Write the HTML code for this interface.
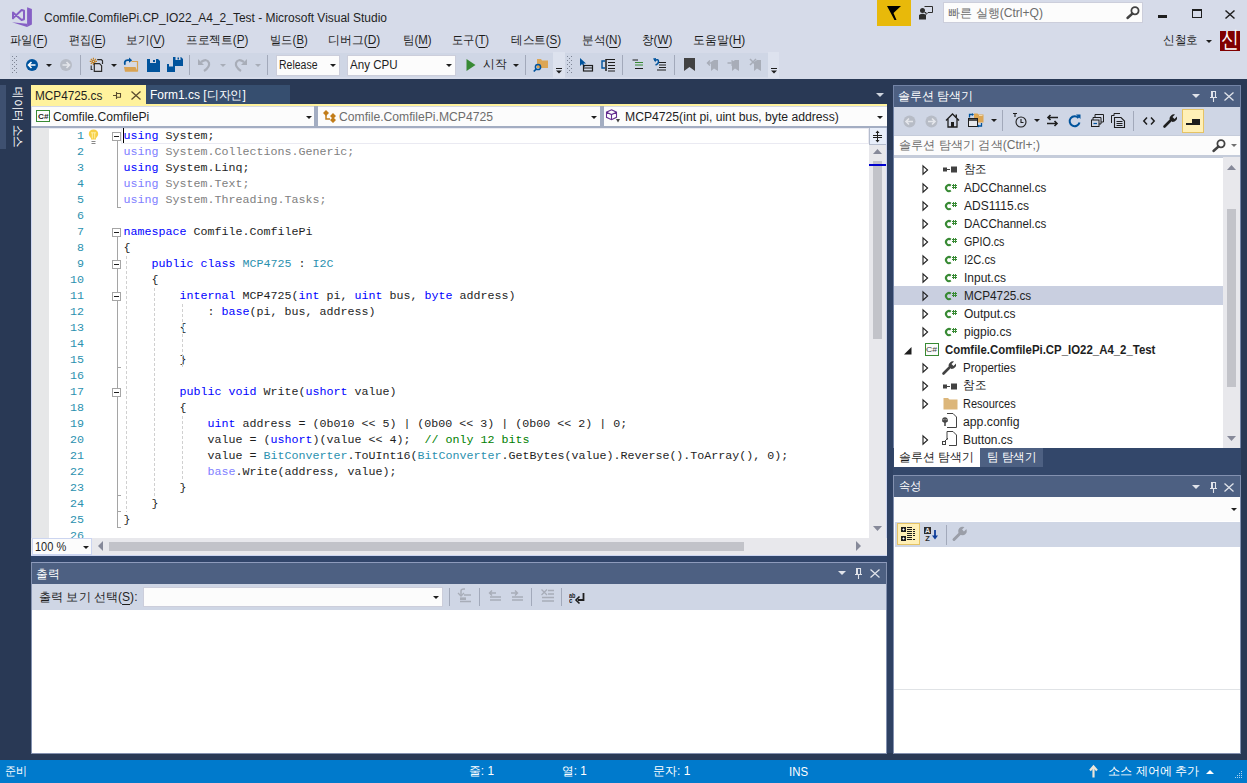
<!DOCTYPE html>
<html><head><meta charset="utf-8">
<style>
*{margin:0;padding:0;box-sizing:border-box}
html,body{width:1247px;height:783px;overflow:hidden}
body{position:relative;background:#D6DBE9;font-family:"Liberation Sans",sans-serif;font-size:12px;color:#1E1E1E}
.a{position:absolute}
.t{position:absolute;white-space:pre;line-height:1;display:inline-block;transform-origin:0 0}
svg{position:absolute;overflow:visible}
</style></head>
<body>
<div class="a" style="left:0px;top:0px;width:1247px;height:79px;background:#D6DBE9;"></div>
<svg style="left:8px;top:4px;" width="30" height="26" viewBox="0 0 30 26"><g fill="#865FC5"><path d="M19.1,3.2 L23.9,5 L23.9,20.6 L19.1,22.9 Z"/><path d="M4,18.3 L19.1,19.8 L19.1,22.9 Z"/></g><path d="M5,8.6 L13.6,16 L16,15.2 L16,6.8 L13.6,6 L5,14.4 Z" fill="none" stroke="#865FC5" stroke-width="2" stroke-linejoin="round"/></svg>
<span class="t" style="transform:scaleX(0.9973);left:44.00px;top:11.84px;font-size:12px;color:#1E1E1E;font-weight:normal;font-family:'Liberation Sans',sans-serif;">Comfile.ComfilePi.CP_IO22_A4_2_Test - Microsoft Visual Studio</span>
<div class="a" style="left:877px;top:0px;width:34px;height:26px;background:#E8B90A;"></div>
<svg style="left:877px;top:0px;" width="34" height="26" viewBox="0 0 34 26"><path d="M10,6 L24,6 L16.5,13 L19.5,20 L17.5,20 Z" fill="#000"/></svg>
<svg style="left:918px;top:5px;" width="16" height="16" viewBox="0 0 16 16"><circle cx="4.5" cy="5.5" r="2.5" fill="#2D2D2D"/><path d="M1,14.5 L1,10 Q4.5,7.5 8,10 L8,14.5 Z" fill="#2D2D2D"/><path d="M6.5,1.5 L14.5,1.5 L14.5,7.5 L10,7.5 L8,9.5 L8,7.5 L6.5,7.5" fill="none" stroke="#2D2D2D" stroke-width="1"/></svg>
<div class="a" style="left:943px;top:2px;width:200px;height:21px;background:#FCFCFC;border:1px solid #CCCEDB"></div>
<span class="t" style="transform:scaleX(1.0070);left:948.40px;top:6.84px;font-size:12px;color:#6D6D6D;font-weight:normal;font-family:'Liberation Sans',sans-serif;">빠른 실행(Ctrl+Q)</span>
<svg style="left:1126px;top:6px;" width="14" height="13" viewBox="0 0 14 13"><circle cx="9" cy="4.8" r="3.6" fill="none" stroke="#424242" stroke-width="1.8"/><path d="M6.5,7.5 L1.5,12" stroke="#424242" stroke-width="2.4" stroke-linecap="round"/></svg>
<div class="a" style="left:1158px;top:15px;width:9px;height:3px;background:#1E1E1E;"></div>
<div class="a" style="left:1192px;top:9px;width:10px;height:9px;background:transparent;border:1px solid #1E1E1E;border-top-width:2px"></div>
<svg style="left:1225px;top:10px;" width="10" height="9" viewBox="0 0 10 9"><path d="M0.5,0.5 L9.5,8.5 M9.5,0.5 L0.5,8.5" stroke="#1E1E1E" stroke-width="1.5"/></svg>
<span class="t" style="transform:scaleX(0.9531);left:10.00px;top:34.34px;font-size:12px;color:#1E1E1E;font-weight:normal;font-family:'Liberation Sans',sans-serif;">파일(<u style="text-underline-offset:2.5px">F</u>)</span>
<span class="t" style="transform:scaleX(0.9196);left:68.50px;top:34.34px;font-size:12px;color:#1E1E1E;font-weight:normal;font-family:'Liberation Sans',sans-serif;">편집(<u style="text-underline-offset:2.5px">E</u>)</span>
<span class="t" style="transform:scaleX(0.9746);left:126.00px;top:34.34px;font-size:12px;color:#1E1E1E;font-weight:normal;font-family:'Liberation Sans',sans-serif;">보기(<u style="text-underline-offset:2.5px">V</u>)</span>
<span class="t" style="transform:scaleX(0.9763);left:186.00px;top:34.34px;font-size:12px;color:#1E1E1E;font-weight:normal;font-family:'Liberation Sans',sans-serif;">프로젝트(<u style="text-underline-offset:2.5px">P</u>)</span>
<span class="t" style="transform:scaleX(0.9421);left:269.50px;top:34.34px;font-size:12px;color:#1E1E1E;font-weight:normal;font-family:'Liberation Sans',sans-serif;">빌드(<u style="text-underline-offset:2.5px">B</u>)</span>
<span class="t" style="transform:scaleX(0.9910);left:328.40px;top:34.34px;font-size:12px;color:#1E1E1E;font-weight:normal;font-family:'Liberation Sans',sans-serif;">디버그(<u style="text-underline-offset:2.5px">D</u>)</span>
<span class="t" style="transform:scaleX(0.9533);left:402.70px;top:34.34px;font-size:12px;color:#1E1E1E;font-weight:normal;font-family:'Liberation Sans',sans-serif;">팀(<u style="text-underline-offset:2.5px">M</u>)</span>
<span class="t" style="transform:scaleX(0.9430);left:452.20px;top:34.34px;font-size:12px;color:#1E1E1E;font-weight:normal;font-family:'Liberation Sans',sans-serif;">도구(<u style="text-underline-offset:2.5px">T</u>)</span>
<span class="t" style="transform:scaleX(0.9651);left:510.50px;top:34.34px;font-size:12px;color:#1E1E1E;font-weight:normal;font-family:'Liberation Sans',sans-serif;">테스트(<u style="text-underline-offset:2.5px">S</u>)</span>
<span class="t" style="transform:scaleX(0.9687);left:581.90px;top:34.34px;font-size:12px;color:#1E1E1E;font-weight:normal;font-family:'Liberation Sans',sans-serif;">분석(<u style="text-underline-offset:2.5px">N</u>)</span>
<span class="t" style="transform:scaleX(0.9672);left:641.80px;top:34.34px;font-size:12px;color:#1E1E1E;font-weight:normal;font-family:'Liberation Sans',sans-serif;">창(<u style="text-underline-offset:2.5px">W</u>)</span>
<span class="t" style="transform:scaleX(0.9910);left:693.00px;top:34.34px;font-size:12px;color:#1E1E1E;font-weight:normal;font-family:'Liberation Sans',sans-serif;">도움말(<u style="text-underline-offset:2.5px">H</u>)</span>
<span class="t" style="transform:scaleX(0.9722);left:1162.80px;top:33.84px;font-size:12px;color:#1E1E1E;font-weight:normal;font-family:'Liberation Sans',sans-serif;">신철호</span>
<svg style="left:1206px;top:39.5px;" width="6" height="4" viewBox="0 0 6 4"><path d="M0,0 L6,0 L3,3 Z" fill="#1E1E1E"/></svg>
<div class="a" style="left:1220px;top:31px;width:20px;height:20px;background:#800000;"></div>
<span class="t" style="transform:scaleX(0.7826);left:1221.00px;top:28.95px;font-size:22.5px;color:#FFFFFF;font-weight:normal;font-family:'Liberation Sans',sans-serif;">신</span>
<div class="a" style="left:10px;top:53px;width:543px;height:24px;background:#CFD6E5;"></div>
<div class="a" style="left:553px;top:52px;width:12px;height:26px;background:#DDE2EE;"></div>
<div class="a" style="left:565px;top:53px;width:203px;height:24px;background:#CFD6E5;"></div>
<div class="a" style="left:768px;top:52px;width:11px;height:26px;background:#DDE2EE;"></div>
<svg style="left:12px;top:56px;" width="5" height="18" viewBox="0 0 5 18"><rect x="0" y="0" width="1" height="1" fill="#7D8494"/><rect x="4" y="0" width="1" height="1" fill="#7D8494"/><rect x="2" y="2" width="1" height="1" fill="#7D8494"/><rect x="0" y="4" width="1" height="1" fill="#7D8494"/><rect x="4" y="4" width="1" height="1" fill="#7D8494"/><rect x="2" y="6" width="1" height="1" fill="#7D8494"/><rect x="0" y="8" width="1" height="1" fill="#7D8494"/><rect x="4" y="8" width="1" height="1" fill="#7D8494"/><rect x="2" y="10" width="1" height="1" fill="#7D8494"/><rect x="0" y="12" width="1" height="1" fill="#7D8494"/><rect x="4" y="12" width="1" height="1" fill="#7D8494"/><rect x="2" y="14" width="1" height="1" fill="#7D8494"/><rect x="0" y="16" width="1" height="1" fill="#7D8494"/><rect x="4" y="16" width="1" height="1" fill="#7D8494"/></svg>
<svg style="left:567px;top:56px;" width="5" height="18" viewBox="0 0 5 18"><rect x="0" y="0" width="1" height="1" fill="#7D8494"/><rect x="4" y="0" width="1" height="1" fill="#7D8494"/><rect x="2" y="2" width="1" height="1" fill="#7D8494"/><rect x="0" y="4" width="1" height="1" fill="#7D8494"/><rect x="4" y="4" width="1" height="1" fill="#7D8494"/><rect x="2" y="6" width="1" height="1" fill="#7D8494"/><rect x="0" y="8" width="1" height="1" fill="#7D8494"/><rect x="4" y="8" width="1" height="1" fill="#7D8494"/><rect x="2" y="10" width="1" height="1" fill="#7D8494"/><rect x="0" y="12" width="1" height="1" fill="#7D8494"/><rect x="4" y="12" width="1" height="1" fill="#7D8494"/><rect x="2" y="14" width="1" height="1" fill="#7D8494"/><rect x="0" y="16" width="1" height="1" fill="#7D8494"/><rect x="4" y="16" width="1" height="1" fill="#7D8494"/></svg>
<svg style="left:26px;top:59px;" width="13" height="13" viewBox="0 0 13 13"><circle cx="6" cy="6" r="6" fill="#00539C"/><path d="M2.5,6 L9.5,6 M5.5,3 L2.5,6 L5.5,9" stroke="#fff" stroke-width="1.6" fill="none"/></svg>
<svg style="left:46px;top:63.5px;" width="6" height="4" viewBox="0 0 6 4"><path d="M0,0 L6,0 L3,3 Z" fill="#1E1E1E"/></svg>
<svg style="left:60px;top:59px;" width="13" height="13" viewBox="0 0 13 13"><circle cx="6" cy="6" r="6" fill="#B7BCC6"/><path d="M2.5,6 L9.5,6 M6.5,3 L9.5,6 L6.5,9" stroke="#E4E6EB" stroke-width="1.6" fill="none"/></svg>
<div class="a" style="left:80px;top:55px;width:1px;height:20px;background:#A2A9BA;"></div>
<svg style="left:89px;top:57px;" width="16" height="16" viewBox="0 0 16 16"><circle cx="4.4" cy="4.4" r="1.2" fill="none" stroke="#C27D1A" stroke-width="1.1"/><path d="M6.30,4.40 L8.00,4.40 M5.74,5.74 L6.95,6.95 M4.40,6.30 L4.40,8.00 M3.06,5.74 L1.85,6.95 M2.50,4.40 L0.80,4.40 M3.06,3.06 L1.85,1.85 M4.40,2.50 L4.40,0.80 M5.74,3.06 L6.95,1.85 " stroke="#C27D1A" stroke-width="1.1"/><path d="M8.2,2.6 L12.3,2.6 L13.5,3.8 L13.5,7" fill="none" stroke="#2D2D2D" stroke-width="1.2"/><path d="M5.3,6.6 L10.5,6.6 L12.6,8.7 L12.6,14.4 L5.3,14.4 Z" fill="#D9DBE4" stroke="#2D2D2D" stroke-width="1.2"/><path d="M2.2,8.5 L2.2,12.5 L3.6,12.5" fill="none" stroke="#2D2D2D" stroke-width="1.1"/></svg>
<svg style="left:111px;top:63.5px;" width="6" height="4" viewBox="0 0 6 4"><path d="M0,0 L6,0 L3,3 Z" fill="#1E1E1E"/></svg>
<svg style="left:123px;top:57px;" width="16" height="16" viewBox="0 0 16 16"><rect x="3.5" y="4.5" width="11" height="10" fill="#D6D9E3"/><path d="M8.5,4.5 L14.5,4.5 L14.5,14.5" fill="none" stroke="#D9A352" stroke-width="1.2"/><path d="M1,10 L12.5,10 L14.6,14.8 L2,14.8 Z" fill="#D9A352"/><path d="M2,7.8 Q0.8,3.4 4.5,3.2 L6.5,3.2" stroke="#00539C" stroke-width="1.8" fill="none"/><path d="M6,0.6 L9.2,3.2 L6,5.8 Z" fill="#00539C"/></svg>
<svg style="left:147px;top:59px;" width="13" height="13" viewBox="0 0 13 13"><path d="M0,0 L11,0 L13,2 L13,13 L0,13 Z" fill="#00539C"/><rect x="3" y="0" width="6" height="4" fill="#CFD6E5"/><rect x="6" y="1" width="2" height="2" fill="#00539C"/></svg>
<svg style="left:167px;top:57px;" width="16" height="15" viewBox="0 0 16 15"><path d="M0,7 L7,7 L8,8 L8,15 L0,15 Z" fill="#00539C"/><rect x="2" y="7" width="4" height="2.5" fill="#CFD6E5"/><path d="M6,0 L14,0 L16,2 L16,9 L6,9 Z" fill="#00539C"/><rect x="8.5" y="0" width="5" height="3" fill="#CFD6E5"/><rect x="10.5" y="0.5" width="1.5" height="2" fill="#00539C"/></svg>
<div class="a" style="left:189px;top:55px;width:1px;height:20px;background:#A2A9BA;"></div>
<svg style="left:198px;top:58px;" width="14" height="14" viewBox="0 0 14 14"><path d="M3,4 Q9,0 11,5 Q12,9 6,13" fill="none" stroke="#A8ADB8" stroke-width="2.2"/><path d="M0,1 L0,7 L6,7 Z" fill="#A8ADB8"/></svg>
<svg style="left:220px;top:64px;" width="6" height="4" viewBox="0 0 6 4"><path d="M0,0 L6,0 L3,3 Z" fill="#A8ADB8"/></svg>
<svg style="left:233px;top:58px;" width="14" height="14" viewBox="0 0 14 14"><path d="M11,4 Q5,0 3,5 Q2,9 8,13" fill="none" stroke="#A8ADB8" stroke-width="2.2"/><path d="M14,1 L14,7 L8,7 Z" fill="#A8ADB8"/></svg>
<svg style="left:255px;top:64px;" width="6" height="4" viewBox="0 0 6 4"><path d="M0,0 L6,0 L3,3 Z" fill="#A8ADB8"/></svg>
<div class="a" style="left:267px;top:55px;width:1px;height:20px;background:#A2A9BA;"></div>
<div class="a" style="left:276px;top:55px;width:64px;height:21px;background:#FCFCFC;border:1px solid #CCCEDB"></div>
<span class="t" style="transform:scaleX(0.8744);left:279.30px;top:58.84px;font-size:12px;color:#1E1E1E;font-weight:normal;font-family:'Liberation Sans',sans-serif;">Release</span>
<svg style="left:330px;top:64px;" width="6" height="4" viewBox="0 0 6 4"><path d="M0,0 L6,0 L3,3 Z" fill="#1E1E1E"/></svg>
<div class="a" style="left:347px;top:55px;width:109px;height:21px;background:#FCFCFC;border:1px solid #CCCEDB"></div>
<span class="t" style="transform:scaleX(0.9644);left:350.20px;top:58.84px;font-size:12px;color:#1E1E1E;font-weight:normal;font-family:'Liberation Sans',sans-serif;">Any CPU</span>
<svg style="left:446px;top:64px;" width="6" height="4" viewBox="0 0 6 4"><path d="M0,0 L6,0 L3,3 Z" fill="#1E1E1E"/></svg>
<svg style="left:466px;top:59px;" width="10" height="12" viewBox="0 0 10 12"><path d="M0.5,0 L9.5,6 L0.5,12 Z" fill="#388A34"/></svg>
<span class="t" style="transform:scaleX(0.9792);left:483.40px;top:58.34px;font-size:12px;color:#1E1E1E;font-weight:normal;font-family:'Liberation Sans',sans-serif;">시작</span>
<svg style="left:513px;top:64px;" width="6" height="4" viewBox="0 0 6 4"><path d="M0,0 L6,0 L3,3 Z" fill="#1E1E1E"/></svg>
<div class="a" style="left:525px;top:55px;width:1px;height:20px;background:#A2A9BA;"></div>
<svg style="left:533px;top:57px;" width="16" height="15" viewBox="0 0 16 15"><path d="M4,2 L8,2 L9,3.5 L15,3.5 L15,11 L4,11 Z" fill="#DCA655"/><circle cx="5" cy="10" r="2.6" fill="none" stroke="#00539C" stroke-width="1.5"/><path d="M3.2,12 L0.8,14.5" stroke="#00539C" stroke-width="1.8"/></svg>
<svg style="left:556px;top:68px;" width="7" height="7" viewBox="0 0 7 7"><path d="M0,0.5 L6,0.5" stroke="#1E1E1E" stroke-width="1"/><path d="M0,2.5 L6,2.5 L3,5.5 Z" fill="#1E1E1E"/></svg>
<svg style="left:579px;top:58px;" width="15" height="14" viewBox="0 0 15 14"><path d="M1,0 L1,8 L3,6 L5,9 L6,8.5 L4.5,5.5 L7,5.5 Z" fill="#00539C"/><rect x="4.5" y="7.5" width="9" height="5.5" fill="none" stroke="#1E1E1E" stroke-width="1.2"/><path d="M4.5,10 L13.5,10" stroke="#1E1E1E" stroke-width="1"/></svg>
<svg style="left:601px;top:58px;" width="15" height="14" viewBox="0 0 15 14"><path d="M4,3 L1,3 L1,10 L4,10" fill="none" stroke="#00539C" stroke-width="1.4"/><path d="M5,1 L5,13" stroke="#1E1E1E" stroke-width="1.5"/><g stroke="#1E1E1E" stroke-width="1"><path d="M5,1.5 L14,1.5 M7,4.5 L14,4.5 M7,7.5 L14,7.5 M7,10.5 L14,10.5 M7,13 L14,13"/></g></svg>
<div class="a" style="left:622px;top:55px;width:1px;height:20px;background:#A2A9BA;"></div>
<svg style="left:632px;top:59px;" width="12" height="11" viewBox="0 0 12 11"><g stroke="#1E1E1E" stroke-width="1.1"><path d="M0.5,1 L6,1 M3,9.5 L11,9.5"/></g><g stroke="#388A34" stroke-width="1.1"><path d="M3,3.5 L11,3.5 M3,6 L11,6"/></g></svg>
<svg style="left:653px;top:58px;" width="14" height="13" viewBox="0 0 14 13"><path d="M1.5,2.5 Q5.5,0.5 5.5,3.5 Q5.5,6 2.5,7" fill="none" stroke="#00539C" stroke-width="1.5"/><path d="M0,0.5 L3,0 L2.5,4.5 Z" fill="#00539C"/><g stroke="#1E1E1E" stroke-width="1.1"><path d="M6,4.5 L13,4.5 M6,7 L13,7 M6,9.5 L13,9.5 M4,12 L13,12"/></g></svg>
<div class="a" style="left:674px;top:55px;width:1px;height:20px;background:#A2A9BA;"></div>
<svg style="left:684px;top:58px;" width="12" height="13" viewBox="0 0 12 13"><path d="M0,0 L11,0 L11,13 L5.5,9 L0,13 Z" fill="#424242"/></svg>
<svg style="left:706px;top:58px;" width="13" height="13" viewBox="0 0 13 13"><path d="M5,4 L5,13 L8,10.5 L12,13 L12,2 L8,2" fill="#A8ADB8"/><path d="M8,5 L1.5,5 M4,2.5 L1.5,5 L4,7.5" stroke="#A8ADB8" stroke-width="1.5" fill="none"/></svg>
<svg style="left:727px;top:58px;" width="13" height="13" viewBox="0 0 13 13"><path d="M5,4 L5,13 L8,10.5 L12,13 L12,2 L8,2" fill="#A8ADB8"/><path d="M0.5,5 L7,5 M4.5,2.5 L7,5 L4.5,7.5" stroke="#A8ADB8" stroke-width="1.5" fill="none"/></svg>
<svg style="left:749px;top:58px;" width="13" height="13" viewBox="0 0 13 13"><path d="M5,4 L5,13 L8,10.5 L12,13 L12,2 L8,2" fill="#A8ADB8"/><path d="M1,1 L7,7 M7,1 L1,7" stroke="#A8ADB8" stroke-width="1.5"/></svg>
<svg style="left:771px;top:68px;" width="7" height="7" viewBox="0 0 7 7"><path d="M0,0.5 L6,0.5" stroke="#1E1E1E" stroke-width="1"/><path d="M0,2.5 L6,2.5 L3,5.5 Z" fill="#1E1E1E"/></svg>
<div class="a" style="left:0px;top:79px;width:1247px;height:681px;background:#293955;"></div>
<div class="a" style="left:0px;top:85px;width:6px;height:64px;background:#3E5070;"></div>
<div class="a" style="left:887px;top:150px;width:6px;height:603px;background:#2F4264;"></div>
<div class="a" style="left:31px;top:556px;width:856px;height:6px;background:#31456A;"></div>
<span class="t" style="transform:rotate(90deg) scaleX(0.9651);left:22.50px;top:86.50px;font-size:11.5px;color:#FFFFFF;font-weight:normal;font-family:'Liberation Sans',sans-serif;">데이터 소스</span>
<div class="a" style="left:31px;top:85px;width:115px;height:19px;background:#FFF29D;"></div>
<div class="a" style="left:146px;top:85px;width:144px;height:19px;background:#364E6F;"></div>
<span class="t" style="transform:scaleX(0.9810);left:35.30px;top:89.84px;font-size:12px;color:#1E1E1E;font-weight:normal;font-family:'Liberation Sans',sans-serif;">MCP4725.cs</span>
<svg style="left:113px;top:92px;" width="9" height="8" viewBox="0 0 9 8"><path d="M0,3.5 L3,3.5 M3.5,0 L3.5,7 M3.5,1.5 L7.5,1.5 L7.5,5 M3.5,5.2 L8,5.2" stroke="#5A4C2E" stroke-width="1.1" fill="none"/></svg>
<svg style="left:131px;top:91px;" width="10" height="9" viewBox="0 0 10 9"><path d="M0.5,0.5 L9.5,8.5 M9.5,0.5 L0.5,8.5" stroke="#5A4C2E" stroke-width="1.3"/></svg>
<span class="t" style="transform:scaleX(0.9978);left:150.40px;top:88.64px;font-size:12px;color:#FFFFFF;font-weight:normal;font-family:'Liberation Sans',sans-serif;">Form1.cs [디자인]</span>
<svg style="left:876px;top:93px;" width="8" height="5" viewBox="0 0 8 5"><path d="M0,0 L8,0 L4,4 Z" fill="#CED4DD"/></svg>
<div class="a" style="left:31px;top:104px;width:856px;height:2px;background:#FFF29D;"></div>
<div class="a" style="left:31px;top:106px;width:856px;height:22px;background:#D5DAE8;"></div>
<div class="a" style="left:32px;top:107px;width:855px;height:19px;background:#FCFCFC;"></div>
<div class="a" style="left:31px;top:126px;width:856px;height:2px;background:#A3ADC2;"></div>
<div class="a" style="left:314px;top:106px;width:4px;height:22px;background:#A3ADC2;"></div>
<div class="a" style="left:600px;top:106px;width:4px;height:22px;background:#A3ADC2;"></div>
<div class="a" style="left:36px;top:110px;width:14px;height:12px;background:#FCFCFC;border:1px solid #388A34"></div>
<span class="t" style="transform:scaleX(1.0260);left:37.80px;top:112.73px;font-size:8px;color:#1E1E1E;font-weight:bold;font-family:'Liberation Sans',sans-serif;">C#</span>
<span class="t" style="transform:scaleX(1.0099);left:53.30px;top:110.84px;font-size:12px;color:#1E1E1E;font-weight:normal;font-family:'Liberation Sans',sans-serif;">Comfile.ComfilePi</span>
<svg style="left:306px;top:116px;" width="6" height="4" viewBox="0 0 6 4"><path d="M0,0 L6,0 L3,3 Z" fill="#1E1E1E"/></svg>
<svg style="left:322px;top:109px;" width="15" height="14" viewBox="0 0 15 14"><path d="M1,4 L4,1 L7,4 L4,7 Z" fill="#C27D1A"/><path d="M4,6 L4,10 L8,10" stroke="#C27D1A" stroke-width="1.5" fill="none"/><path d="M8,7 L11,4 L14,7 L11,10 Z M8,11 L11,8 L14,11 L11,14 Z" fill="#C27D1A"/></svg>
<span class="t" style="transform:scaleX(1.0127);left:339.00px;top:110.84px;font-size:12px;color:#6D6D6D;font-weight:normal;font-family:'Liberation Sans',sans-serif;">Comfile.ComfilePi.MCP4725</span>
<svg style="left:591px;top:116px;" width="6" height="4" viewBox="0 0 6 4"><path d="M0,0 L6,0 L3,3 Z" fill="#1E1E1E"/></svg>
<svg style="left:606px;top:109px;" width="15" height="14" viewBox="0 0 15 14"><path d="M5.5,0.8 L10.5,3.2 L10.5,8.3 L5.5,10.7 L0.5,8.3 L0.5,3.2 Z M0.5,3.2 L5.5,5.6 L10.5,3.2 M5.5,5.6 L5.5,10.7" fill="none" stroke="#652D90" stroke-width="1.1"/><path d="M10,10 L14,10 L12,13.5 Z" fill="#424242"/></svg>
<span class="t" style="transform:scaleX(1.0143);left:624.50px;top:110.84px;font-size:12px;color:#1E1E1E;font-weight:normal;font-family:'Liberation Sans',sans-serif;">MCP4725(int pi, uint bus, byte address)</span>
<svg style="left:877px;top:116px;" width="6" height="4" viewBox="0 0 6 4"><path d="M0,0 L6,0 L3,3 Z" fill="#1E1E1E"/></svg>
<div class="a" style="left:31px;top:128px;width:856px;height:428px;background:#FFFFFF;"></div>
<div class="a" style="left:31px;top:128px;width:1px;height:428px;background:#CCD5F0;"></div>
<div class="a" style="left:886px;top:128px;width:1px;height:428px;background:#CCD5F0;"></div>
<div class="a" style="left:32px;top:128px;width:837px;height:1px;background:#E8EAF3;"></div>
<div class="a" style="left:32px;top:128px;width:17px;height:410px;background:#E6E7E8;"></div>
<div class="a" style="left:121px;top:128px;width:748px;height:16px;background:transparent;border:1px solid #EAEAF2"></div>
<div class="a" style="left:123px;top:128px;width:1px;height:15px;background:#000000;"></div>
<span class="t" style="left:77.00px;top:131.05px;font-size:11.67px;color:#2B91AF;font-weight:normal;font-family:'Liberation Mono',monospace;">1</span>
<span class="t" style="left:77.00px;top:147.05px;font-size:11.67px;color:#2B91AF;font-weight:normal;font-family:'Liberation Mono',monospace;">2</span>
<span class="t" style="left:77.00px;top:163.05px;font-size:11.67px;color:#2B91AF;font-weight:normal;font-family:'Liberation Mono',monospace;">3</span>
<span class="t" style="left:77.00px;top:179.05px;font-size:11.67px;color:#2B91AF;font-weight:normal;font-family:'Liberation Mono',monospace;">4</span>
<span class="t" style="left:77.00px;top:195.05px;font-size:11.67px;color:#2B91AF;font-weight:normal;font-family:'Liberation Mono',monospace;">5</span>
<span class="t" style="left:77.00px;top:211.05px;font-size:11.67px;color:#2B91AF;font-weight:normal;font-family:'Liberation Mono',monospace;">6</span>
<span class="t" style="left:77.00px;top:227.05px;font-size:11.67px;color:#2B91AF;font-weight:normal;font-family:'Liberation Mono',monospace;">7</span>
<span class="t" style="left:77.00px;top:243.05px;font-size:11.67px;color:#2B91AF;font-weight:normal;font-family:'Liberation Mono',monospace;">8</span>
<span class="t" style="left:77.00px;top:259.05px;font-size:11.67px;color:#2B91AF;font-weight:normal;font-family:'Liberation Mono',monospace;">9</span>
<span class="t" style="left:70.00px;top:275.05px;font-size:11.67px;color:#2B91AF;font-weight:normal;font-family:'Liberation Mono',monospace;">10</span>
<span class="t" style="left:70.00px;top:291.05px;font-size:11.67px;color:#2B91AF;font-weight:normal;font-family:'Liberation Mono',monospace;">11</span>
<span class="t" style="left:70.00px;top:307.05px;font-size:11.67px;color:#2B91AF;font-weight:normal;font-family:'Liberation Mono',monospace;">12</span>
<span class="t" style="left:70.00px;top:323.05px;font-size:11.67px;color:#2B91AF;font-weight:normal;font-family:'Liberation Mono',monospace;">13</span>
<span class="t" style="left:70.00px;top:339.05px;font-size:11.67px;color:#2B91AF;font-weight:normal;font-family:'Liberation Mono',monospace;">14</span>
<span class="t" style="left:70.00px;top:355.05px;font-size:11.67px;color:#2B91AF;font-weight:normal;font-family:'Liberation Mono',monospace;">15</span>
<span class="t" style="left:70.00px;top:371.05px;font-size:11.67px;color:#2B91AF;font-weight:normal;font-family:'Liberation Mono',monospace;">16</span>
<span class="t" style="left:70.00px;top:387.05px;font-size:11.67px;color:#2B91AF;font-weight:normal;font-family:'Liberation Mono',monospace;">17</span>
<span class="t" style="left:70.00px;top:403.05px;font-size:11.67px;color:#2B91AF;font-weight:normal;font-family:'Liberation Mono',monospace;">18</span>
<span class="t" style="left:70.00px;top:419.05px;font-size:11.67px;color:#2B91AF;font-weight:normal;font-family:'Liberation Mono',monospace;">19</span>
<span class="t" style="left:70.00px;top:435.05px;font-size:11.67px;color:#2B91AF;font-weight:normal;font-family:'Liberation Mono',monospace;">20</span>
<span class="t" style="left:70.00px;top:451.05px;font-size:11.67px;color:#2B91AF;font-weight:normal;font-family:'Liberation Mono',monospace;">21</span>
<span class="t" style="left:70.00px;top:467.05px;font-size:11.67px;color:#2B91AF;font-weight:normal;font-family:'Liberation Mono',monospace;">22</span>
<span class="t" style="left:70.00px;top:483.05px;font-size:11.67px;color:#2B91AF;font-weight:normal;font-family:'Liberation Mono',monospace;">23</span>
<span class="t" style="left:70.00px;top:499.05px;font-size:11.67px;color:#2B91AF;font-weight:normal;font-family:'Liberation Mono',monospace;">24</span>
<span class="t" style="left:70.00px;top:515.05px;font-size:11.67px;color:#2B91AF;font-weight:normal;font-family:'Liberation Mono',monospace;">25</span>
<span class="t" style="left:70.00px;top:531.05px;font-size:11.67px;color:#2B91AF;font-weight:normal;font-family:'Liberation Mono',monospace;">26</span>
<svg style="left:88px;top:129px;" width="11" height="16" viewBox="0 0 11 16"><path d="M5.5,0.6 C8.3,0.6 10.2,2.4 10.2,5 C10.2,6.8 9,7.8 8,9.2 L8,10.5 L3,10.5 L3,9.2 C2,7.8 0.8,6.8 0.8,5 C0.8,2.4 2.7,0.6 5.5,0.6 Z" fill="#F7D046"/><path d="M3,3.8 L8,3.8 M4.3,3.8 L4.3,9.5 M6.7,3.8 L6.7,9.5" stroke="#FFF3B0" stroke-width="0.9"/><path d="M3.5,12.5 L7.5,12.5 M3.5,14.5 L7.5,14.5" stroke="#888" stroke-width="1"/></svg>
<span class="t" style="left:123.50px;top:131.05px;font-size:11.67px;color:#0000FF;font-weight:normal;font-family:'Liberation Mono',monospace;">using</span>
<span class="t" style="left:165.50px;top:131.05px;font-size:11.67px;color:#1E1E1E;font-weight:normal;font-family:'Liberation Mono',monospace;">System;</span>
<span class="t" style="left:123.50px;top:147.05px;font-size:11.67px;color:#8080FF;font-weight:normal;font-family:'Liberation Mono',monospace;">using</span>
<span class="t" style="left:165.50px;top:147.05px;font-size:11.67px;color:#808080;font-weight:normal;font-family:'Liberation Mono',monospace;">System.Collections.Generic;</span>
<span class="t" style="left:123.50px;top:163.05px;font-size:11.67px;color:#0000FF;font-weight:normal;font-family:'Liberation Mono',monospace;">using</span>
<span class="t" style="left:165.50px;top:163.05px;font-size:11.67px;color:#1E1E1E;font-weight:normal;font-family:'Liberation Mono',monospace;">System.Linq;</span>
<span class="t" style="left:123.50px;top:179.05px;font-size:11.67px;color:#8080FF;font-weight:normal;font-family:'Liberation Mono',monospace;">using</span>
<span class="t" style="left:165.50px;top:179.05px;font-size:11.67px;color:#808080;font-weight:normal;font-family:'Liberation Mono',monospace;">System.Text;</span>
<span class="t" style="left:123.50px;top:195.05px;font-size:11.67px;color:#8080FF;font-weight:normal;font-family:'Liberation Mono',monospace;">using</span>
<span class="t" style="left:165.50px;top:195.05px;font-size:11.67px;color:#808080;font-weight:normal;font-family:'Liberation Mono',monospace;">System.Threading.Tasks;</span>
<span class="t" style="left:123.50px;top:227.05px;font-size:11.67px;color:#0000FF;font-weight:normal;font-family:'Liberation Mono',monospace;">namespace</span>
<span class="t" style="left:193.50px;top:227.05px;font-size:11.67px;color:#1E1E1E;font-weight:normal;font-family:'Liberation Mono',monospace;">Comfile.ComfilePi</span>
<span class="t" style="left:123.50px;top:243.05px;font-size:11.67px;color:#1E1E1E;font-weight:normal;font-family:'Liberation Mono',monospace;">{</span>
<span class="t" style="left:151.50px;top:259.05px;font-size:11.67px;color:#0000FF;font-weight:normal;font-family:'Liberation Mono',monospace;">public</span>
<span class="t" style="left:200.50px;top:259.05px;font-size:11.67px;color:#0000FF;font-weight:normal;font-family:'Liberation Mono',monospace;">class</span>
<span class="t" style="left:242.50px;top:259.05px;font-size:11.67px;color:#2B91AF;font-weight:normal;font-family:'Liberation Mono',monospace;">MCP4725</span>
<span class="t" style="left:298.50px;top:259.05px;font-size:11.67px;color:#1E1E1E;font-weight:normal;font-family:'Liberation Mono',monospace;">: </span>
<span class="t" style="left:312.50px;top:259.05px;font-size:11.67px;color:#2B91AF;font-weight:normal;font-family:'Liberation Mono',monospace;">I2C</span>
<span class="t" style="left:151.50px;top:275.05px;font-size:11.67px;color:#1E1E1E;font-weight:normal;font-family:'Liberation Mono',monospace;">{</span>
<span class="t" style="left:179.50px;top:291.05px;font-size:11.67px;color:#0000FF;font-weight:normal;font-family:'Liberation Mono',monospace;">internal</span>
<span class="t" style="left:242.50px;top:291.05px;font-size:11.67px;color:#1E1E1E;font-weight:normal;font-family:'Liberation Mono',monospace;">MCP4725(</span>
<span class="t" style="left:298.50px;top:291.05px;font-size:11.67px;color:#0000FF;font-weight:normal;font-family:'Liberation Mono',monospace;">int</span>
<span class="t" style="left:326.50px;top:291.05px;font-size:11.67px;color:#1E1E1E;font-weight:normal;font-family:'Liberation Mono',monospace;">pi, </span>
<span class="t" style="left:354.50px;top:291.05px;font-size:11.67px;color:#0000FF;font-weight:normal;font-family:'Liberation Mono',monospace;">uint</span>
<span class="t" style="left:389.50px;top:291.05px;font-size:11.67px;color:#1E1E1E;font-weight:normal;font-family:'Liberation Mono',monospace;">bus, </span>
<span class="t" style="left:424.50px;top:291.05px;font-size:11.67px;color:#0000FF;font-weight:normal;font-family:'Liberation Mono',monospace;">byte</span>
<span class="t" style="left:459.50px;top:291.05px;font-size:11.67px;color:#1E1E1E;font-weight:normal;font-family:'Liberation Mono',monospace;">address)</span>
<span class="t" style="left:207.50px;top:307.05px;font-size:11.67px;color:#1E1E1E;font-weight:normal;font-family:'Liberation Mono',monospace;">: </span>
<span class="t" style="left:221.50px;top:307.05px;font-size:11.67px;color:#0000FF;font-weight:normal;font-family:'Liberation Mono',monospace;">base</span>
<span class="t" style="left:249.50px;top:307.05px;font-size:11.67px;color:#1E1E1E;font-weight:normal;font-family:'Liberation Mono',monospace;">(pi, bus, address)</span>
<span class="t" style="left:179.50px;top:323.05px;font-size:11.67px;color:#1E1E1E;font-weight:normal;font-family:'Liberation Mono',monospace;">{</span>
<span class="t" style="left:179.50px;top:355.05px;font-size:11.67px;color:#1E1E1E;font-weight:normal;font-family:'Liberation Mono',monospace;">}</span>
<span class="t" style="left:179.50px;top:387.05px;font-size:11.67px;color:#0000FF;font-weight:normal;font-family:'Liberation Mono',monospace;">public</span>
<span class="t" style="left:228.50px;top:387.05px;font-size:11.67px;color:#0000FF;font-weight:normal;font-family:'Liberation Mono',monospace;">void</span>
<span class="t" style="left:263.50px;top:387.05px;font-size:11.67px;color:#1E1E1E;font-weight:normal;font-family:'Liberation Mono',monospace;">Write(</span>
<span class="t" style="left:305.50px;top:387.05px;font-size:11.67px;color:#0000FF;font-weight:normal;font-family:'Liberation Mono',monospace;">ushort</span>
<span class="t" style="left:354.50px;top:387.05px;font-size:11.67px;color:#1E1E1E;font-weight:normal;font-family:'Liberation Mono',monospace;">value)</span>
<span class="t" style="left:179.50px;top:403.05px;font-size:11.67px;color:#1E1E1E;font-weight:normal;font-family:'Liberation Mono',monospace;">{</span>
<span class="t" style="left:207.50px;top:419.05px;font-size:11.67px;color:#0000FF;font-weight:normal;font-family:'Liberation Mono',monospace;">uint</span>
<span class="t" style="left:242.50px;top:419.05px;font-size:11.67px;color:#1E1E1E;font-weight:normal;font-family:'Liberation Mono',monospace;">address = (0b010 &lt;&lt; 5) | (0b00 &lt;&lt; 3) | (0b00 &lt;&lt; 2) | 0;</span>
<span class="t" style="left:207.50px;top:435.05px;font-size:11.67px;color:#1E1E1E;font-weight:normal;font-family:'Liberation Mono',monospace;">value = (</span>
<span class="t" style="left:270.50px;top:435.05px;font-size:11.67px;color:#0000FF;font-weight:normal;font-family:'Liberation Mono',monospace;">ushort</span>
<span class="t" style="left:312.50px;top:435.05px;font-size:11.67px;color:#1E1E1E;font-weight:normal;font-family:'Liberation Mono',monospace;">)(value &lt;&lt; 4);  </span>
<span class="t" style="left:424.50px;top:435.05px;font-size:11.67px;color:#008000;font-weight:normal;font-family:'Liberation Mono',monospace;">// only 12 bits</span>
<span class="t" style="left:207.50px;top:451.05px;font-size:11.67px;color:#1E1E1E;font-weight:normal;font-family:'Liberation Mono',monospace;">value = </span>
<span class="t" style="left:263.50px;top:451.05px;font-size:11.67px;color:#2B91AF;font-weight:normal;font-family:'Liberation Mono',monospace;">BitConverter</span>
<span class="t" style="left:347.50px;top:451.05px;font-size:11.67px;color:#1E1E1E;font-weight:normal;font-family:'Liberation Mono',monospace;">.ToUInt16(</span>
<span class="t" style="left:417.50px;top:451.05px;font-size:11.67px;color:#2B91AF;font-weight:normal;font-family:'Liberation Mono',monospace;">BitConverter</span>
<span class="t" style="left:501.50px;top:451.05px;font-size:11.67px;color:#1E1E1E;font-weight:normal;font-family:'Liberation Mono',monospace;">.GetBytes(value).Reverse().ToArray(), 0);</span>
<span class="t" style="left:207.50px;top:467.05px;font-size:11.67px;color:#8080FF;font-weight:normal;font-family:'Liberation Mono',monospace;">base</span>
<span class="t" style="left:235.50px;top:467.05px;font-size:11.67px;color:#1E1E1E;font-weight:normal;font-family:'Liberation Mono',monospace;">.Write(address, value);</span>
<span class="t" style="left:179.50px;top:483.05px;font-size:11.67px;color:#1E1E1E;font-weight:normal;font-family:'Liberation Mono',monospace;">}</span>
<span class="t" style="left:151.50px;top:499.05px;font-size:11.67px;color:#1E1E1E;font-weight:normal;font-family:'Liberation Mono',monospace;">}</span>
<span class="t" style="left:123.50px;top:515.05px;font-size:11.67px;color:#1E1E1E;font-weight:normal;font-family:'Liberation Mono',monospace;">}</span>
<div class="a" style="left:117px;top:141px;width:1px;height:66px;background:#A5A5A5;"></div>
<div class="a" style="left:117px;top:207px;width:4px;height:1px;background:#A5A5A5;"></div>
<div class="a" style="left:117px;top:237px;width:1px;height:290px;background:#A5A5A5;"></div>
<div class="a" style="left:117px;top:527px;width:4px;height:1px;background:#A5A5A5;"></div>
<div class="a" style="left:117px;top:269px;width:1px;height:242px;background:#A5A5A5;"></div>
<div class="a" style="left:117px;top:511px;width:4px;height:1px;background:#A5A5A5;"></div>
<div class="a" style="left:117px;top:301px;width:1px;height:66px;background:#A5A5A5;"></div>
<div class="a" style="left:117px;top:367px;width:4px;height:1px;background:#A5A5A5;"></div>
<div class="a" style="left:117px;top:397px;width:1px;height:98px;background:#A5A5A5;"></div>
<div class="a" style="left:117px;top:495px;width:4px;height:1px;background:#A5A5A5;"></div>
<svg style="left:112px;top:132px;" width="9" height="9" viewBox="0 0 9 9"><rect x="0.5" y="0.5" width="8" height="8" fill="#fff" stroke="#A5A5A5"/><path d="M2,4.5 L7,4.5" stroke="#1E1E1E"/></svg>
<svg style="left:112px;top:228px;" width="9" height="9" viewBox="0 0 9 9"><rect x="0.5" y="0.5" width="8" height="8" fill="#fff" stroke="#A5A5A5"/><path d="M2,4.5 L7,4.5" stroke="#1E1E1E"/></svg>
<svg style="left:112px;top:260px;" width="9" height="9" viewBox="0 0 9 9"><rect x="0.5" y="0.5" width="8" height="8" fill="#fff" stroke="#A5A5A5"/><path d="M2,4.5 L7,4.5" stroke="#1E1E1E"/></svg>
<svg style="left:112px;top:292px;" width="9" height="9" viewBox="0 0 9 9"><rect x="0.5" y="0.5" width="8" height="8" fill="#fff" stroke="#A5A5A5"/><path d="M2,4.5 L7,4.5" stroke="#1E1E1E"/></svg>
<svg style="left:112px;top:388px;" width="9" height="9" viewBox="0 0 9 9"><rect x="0.5" y="0.5" width="8" height="8" fill="#fff" stroke="#A5A5A5"/><path d="M2,4.5 L7,4.5" stroke="#1E1E1E"/></svg>
<div class="a" style="left:126px;top:256px;width:1px;height:256px;background:transparent;background-image:linear-gradient(#D0D0D0 60%,transparent 60%);background-size:1px 5px"></div>
<div class="a" style="left:154px;top:288px;width:1px;height:208px;background:transparent;background-image:linear-gradient(#D0D0D0 60%,transparent 60%);background-size:1px 5px"></div>
<div class="a" style="left:182px;top:304px;width:1px;height:64px;background:transparent;background-image:linear-gradient(#D0D0D0 60%,transparent 60%);background-size:1px 5px"></div>
<div class="a" style="left:182px;top:416px;width:1px;height:64px;background:transparent;background-image:linear-gradient(#D0D0D0 60%,transparent 60%);background-size:1px 5px"></div>
<div class="a" style="left:869px;top:128px;width:17px;height:410px;background:#E8E8EC;"></div>
<div class="a" style="left:869px;top:128px;width:17px;height:17px;background:#E8EEFA;border-left:1px solid #B4BCCD;border-bottom:1px solid #B4BCCD"></div>
<svg style="left:872px;top:130px;" width="11" height="13" viewBox="0 0 11 13"><path d="M1,5.5 L10,5.5 M1,7.5 L10,7.5" stroke="#1E1E1E" stroke-width="1"/><path d="M5.5,1 L5.5,12" stroke="#1E1E1E" stroke-width="1"/><path d="M3.5,3 L5.5,0.5 L7.5,3 Z M3.5,10 L5.5,12.5 L7.5,10 Z" fill="#1E1E1E"/></svg>
<svg style="left:873px;top:149px;" width="9" height="5" viewBox="0 0 9 5"><path d="M0,5 L4.5,0 L9,5 Z" fill="#868999"/></svg>
<div class="a" style="left:869px;top:164px;width:17px;height:2px;background:#0000CD;"></div>
<div class="a" style="left:873px;top:161px;width:9px;height:178px;background:#C2C3C9;"></div>
<div class="a" style="left:869px;top:164px;width:17px;height:2px;background:#0000CD;"></div>
<svg style="left:873px;top:526px;" width="9" height="5" viewBox="0 0 9 5"><path d="M0,0 L4.5,5 L9,0 Z" fill="#868999"/></svg>
<div class="a" style="left:31px;top:538px;width:856px;height:18px;background:#E8E8EC;"></div>
<div class="a" style="left:32px;top:538px;width:60px;height:17px;background:#FCFCFC;border:1px solid #CCD5F0"></div>
<span class="t" style="transform:scaleX(0.9168);left:34.60px;top:540.84px;font-size:12px;color:#1E1E1E;font-weight:normal;font-family:'Liberation Sans',sans-serif;">100 %</span>
<svg style="left:83px;top:546px;" width="6" height="4" viewBox="0 0 6 4"><path d="M0,0 L6,0 L3,3 Z" fill="#1E1E1E"/></svg>
<svg style="left:98px;top:541px;" width="6" height="10" viewBox="0 0 6 10"><path d="M5,0 L0,5 L5,10 Z" fill="#868999"/></svg>
<div class="a" style="left:109px;top:542px;width:635px;height:9px;background:#C2C3C9;"></div>
<svg style="left:856px;top:541px;" width="6" height="10" viewBox="0 0 6 10"><path d="M0,0 L5,5 L0,10 Z" fill="#868999"/></svg>
<div class="a" style="left:31px;top:555px;width:856px;height:1px;background:#CCD5F0;"></div>
<div class="a" style="left:31px;top:562px;width:856px;height:192px;background:#FFFFFF;border:1px solid #8391B0;border-top-color:#8E9BBC"></div>
<div class="a" style="left:32px;top:563px;width:854px;height:21px;background:#4D6082;"></div>
<div class="a" style="left:32px;top:584px;width:854px;height:26px;background:#CFD6E5;"></div>
<span class="t" style="transform:scaleX(0.9792);left:36.00px;top:567.84px;font-size:12px;color:#FFFFFF;font-weight:normal;font-family:'Liberation Sans',sans-serif;">출력</span>
<svg style="left:838px;top:571px;" width="8" height="4" viewBox="0 0 8 4"><path d="M0,0 L8,0 L4,4 Z" fill="#E0E3EA"/></svg>
<svg style="left:855px;top:568px;" width="8" height="11" viewBox="0 0 8 11"><path d="M2,0.5 L5.5,0.5 L5.5,6.5 M0,6.5 L7,6.5 M3.5,6.5 L3.5,11" fill="none" stroke="#E0E3EA" stroke-width="1.1"/><rect x="1" y="0" width="2" height="6.5" fill="#E0E3EA"/></svg>
<svg style="left:870px;top:568.5px;" width="10" height="9" viewBox="0 0 10 9"><path d="M0.5,0.5 L9.5,8.5 M9.5,0.5 L0.5,8.5" stroke="#E0E3EA" stroke-width="1.3"/></svg>
<span class="t" style="transform:scaleX(1.0048);left:38.60px;top:591.34px;font-size:12px;color:#1E1E1E;font-weight:normal;font-family:'Liberation Sans',sans-serif;">출력 보기 선택(<u style="text-underline-offset:2.5px">S</u>):</span>
<div class="a" style="left:143px;top:587px;width:300px;height:20px;background:#FCFCFC;border:1px solid #CCCEDB"></div>
<svg style="left:433px;top:596px;" width="6" height="4" viewBox="0 0 6 4"><path d="M0,0 L6,0 L3,3 Z" fill="#1E1E1E"/></svg>
<div class="a" style="left:449px;top:588px;width:1px;height:18px;background:#A2A9BA;"></div>
<svg style="left:458px;top:588px;" width="14" height="16" viewBox="0 0 14 16"><path d="M3,7 L3,3 Q3,1 6,1 L7,1" stroke="#A8ADB8" stroke-width="1.5" fill="none"/><path d="M0,5 L3,8 L6,5" stroke="#A8ADB8" stroke-width="1.3" fill="none"/><g stroke="#A8ADB8" stroke-width="1.3"><path d="M6,7 L13,7 M2,10.5 L8,10.5 M2,13.5 L13,13.5"/></g><rect x="2" y="9.5" width="6" height="2.5" fill="#A8ADB8"/></svg>
<div class="a" style="left:479px;top:588px;width:1px;height:18px;background:#A2A9BA;"></div>
<svg style="left:488px;top:589px;" width="14" height="14" viewBox="0 0 14 14"><path d="M8,4 L2,4 M4,1.5 L1.5,4 L4,6.5" stroke="#A8ADB8" stroke-width="1.4" fill="none"/><g stroke="#A8ADB8" stroke-width="1.4"><path d="M2,8 L13,8 M2,11 L13,11"/></g></svg>
<svg style="left:510px;top:589px;" width="14" height="14" viewBox="0 0 14 14"><path d="M1,4 L7,4 M5,1.5 L7.5,4 L5,6.5" stroke="#A8ADB8" stroke-width="1.4" fill="none"/><g stroke="#A8ADB8" stroke-width="1.4"><path d="M2,8 L13,8 M2,11 L13,11"/></g></svg>
<div class="a" style="left:531px;top:588px;width:1px;height:18px;background:#A2A9BA;"></div>
<svg style="left:541px;top:589px;" width="14" height="14" viewBox="0 0 14 14"><path d="M0.5,0.5 L6,6 M6,0.5 L0.5,6" stroke="#A8ADB8" stroke-width="1.3"/><g stroke="#A8ADB8" stroke-width="1.4"><path d="M7,1.5 L13,1.5 M7,5 L13,5 M1,8.5 L13,8.5 M1,12 L13,12"/></g></svg>
<div class="a" style="left:561px;top:588px;width:1px;height:18px;background:#A2A9BA;"></div>
<span class="t" style="transform:scaleX(0.7954);left:569.30px;top:591.57px;font-size:7px;color:#1E1E1E;font-weight:bold;font-family:'Liberation Sans',sans-serif;">ab</span>
<span class="t" style="transform:scaleX(0.8960);left:569.30px;top:596.57px;font-size:7px;color:#1E1E1E;font-weight:bold;font-family:'Liberation Sans',sans-serif;">c</span>
<svg style="left:575px;top:593px;" width="11" height="11" viewBox="0 0 11 11"><path d="M8.5,0 L8.5,7 L3,7" stroke="#1E1E1E" stroke-width="1.8" fill="none"/><path d="M4.5,3.5 L1,7 L4.5,10.5" stroke="#1E1E1E" stroke-width="1.6" fill="none"/></svg>
<div class="a" style="left:893px;top:85px;width:348px;height:384px;background:#FFFFFF;"></div>
<div class="a" style="left:893px;top:85px;width:348px;height:384px;background:transparent;border:1px solid #7384A6"></div>
<div class="a" style="left:894px;top:86px;width:346px;height:21px;background:#4D6082;"></div>
<div class="a" style="left:894px;top:107px;width:346px;height:28px;background:#CFD6E5;"></div>
<span class="t" style="transform:scaleX(1.0007);left:898.20px;top:90.34px;font-size:12px;color:#FFFFFF;font-weight:normal;font-family:'Liberation Sans',sans-serif;">솔루션 탐색기</span>
<svg style="left:1192px;top:94px;" width="8" height="4" viewBox="0 0 8 4"><path d="M0,0 L8,0 L4,4 Z" fill="#E0E3EA"/></svg>
<svg style="left:1210px;top:91px;" width="8" height="11" viewBox="0 0 8 11"><path d="M2,0.5 L5.5,0.5 L5.5,6.5 M0,6.5 L7,6.5 M3.5,6.5 L3.5,11" fill="none" stroke="#E0E3EA" stroke-width="1.1"/><rect x="1" y="0" width="2" height="6.5" fill="#E0E3EA"/></svg>
<svg style="left:1224px;top:91.5px;" width="10" height="9" viewBox="0 0 10 9"><path d="M0.5,0.5 L9.5,8.5 M9.5,0.5 L0.5,8.5" stroke="#E0E3EA" stroke-width="1.3"/></svg>
<svg style="left:903px;top:115px;" width="13" height="13" viewBox="0 0 13 13"><circle cx="6.5" cy="6.5" r="6" fill="#B7BCC6"/><path d="M3,6.5 L10,6.5 M6,3.5 L3,6.5 L6,9.5" stroke="#E4E6EB" stroke-width="1.6" fill="none"/></svg>
<svg style="left:925px;top:115px;" width="13" height="13" viewBox="0 0 13 13"><circle cx="6.5" cy="6.5" r="6" fill="#B7BCC6"/><path d="M3,6.5 L10,6.5 M7,3.5 L10,6.5 L7,9.5" stroke="#E4E6EB" stroke-width="1.6" fill="none"/></svg>
<svg style="left:945px;top:113px;" width="15" height="15" viewBox="0 0 15 15"><path d="M1,7.5 L7.5,1 L14,7.5 M3,6 L3,14 L12,14 L12,6" fill="none" stroke="#1E1E1E" stroke-width="1.3"/><rect x="6" y="9" width="3" height="5" fill="#1E1E1E"/><rect x="10.5" y="1.5" width="1.5" height="3" fill="#1E1E1E"/></svg>
<svg style="left:968px;top:113px;" width="16" height="15" viewBox="0 0 16 15"><path d="M6,0.5 L9.5,0.5 L10.5,1.5 L15.5,1.5 L15.5,9.5 L6,9.5 Z" fill="#DCA655"/><path d="M11,2.5 L14.5,2.5" stroke="#F3D9A8" stroke-width="1"/><rect x="0.5" y="5.5" width="9" height="8" fill="#E7E8EC" stroke="#1E1E1E"/><path d="M0.5,7 L9.5,7" stroke="#1E1E1E" stroke-width="1.5"/><path d="M1.5,4.5 L1.5,1.5 L4,1.5" stroke="#00539C" stroke-width="1.3" fill="none"/><path d="M4,0 L6,1.5 L4,3 Z" fill="#00539C"/><path d="M13.5,10 L13.5,13 L11,13" stroke="#00539C" stroke-width="1.3" fill="none"/><path d="M11,11.5 L9,13 L11,14.5 Z" fill="#00539C"/></svg>
<svg style="left:991px;top:119px;" width="6" height="4" viewBox="0 0 6 4"><path d="M0,0 L6,0 L3,3 Z" fill="#1E1E1E"/></svg>
<div class="a" style="left:1002px;top:110px;width:1px;height:21px;background:#A2A9BA;"></div>
<svg style="left:1013px;top:113px;" width="14" height="15" viewBox="0 0 14 15"><path d="M0,0.5 L4,0.5 M2,0.5 L2,4" stroke="#1E1E1E" stroke-width="1.1"/><circle cx="8" cy="9" r="5" fill="none" stroke="#1E1E1E" stroke-width="1.1"/><path d="M8,6 L8,9.5 L10.5,9.5" stroke="#1E1E1E" stroke-width="1.1" fill="none"/></svg>
<svg style="left:1034px;top:119px;" width="6" height="4" viewBox="0 0 6 4"><path d="M0,0 L6,0 L3,3 Z" fill="#1E1E1E"/></svg>
<svg style="left:1046px;top:114px;" width="13" height="13" viewBox="0 0 13 13"><path d="M12,3.5 L2,3.5 M4.5,1 L2,3.5 L4.5,6 M1,9.5 L11,9.5 M8.5,7 L11,9.5 L8.5,12" stroke="#1E1E1E" stroke-width="1.6" fill="none"/></svg>
<svg style="left:1068px;top:114px;" width="14" height="14" viewBox="0 0 14 14"><path d="M10.5,4 A5,5 0 1 0 11.5,8.5" stroke="#00539C" stroke-width="2" fill="none"/><path d="M8,0.5 L12.5,0.5 L12.5,5 Z" fill="#00539C"/></svg>
<svg style="left:1091px;top:114px;" width="13" height="13" viewBox="0 0 13 13"><path d="M4,3.5 L4,0.5 L12.5,0.5 L12.5,8 L10,8 M2,6 L2,3.5 L10,3.5 L10,10 L8,10" fill="none" stroke="#1E1E1E" stroke-width="1"/><rect x="0.5" y="6" width="7.5" height="6.5" fill="none" stroke="#1E1E1E" stroke-width="1"/><path d="M2.5,9.5 L6,9.5" stroke="#00539C" stroke-width="1.2"/></svg>
<svg style="left:1111px;top:113px;" width="16" height="15" viewBox="0 0 16 15"><path d="M3,3 L3,0.5 L9,0.5 M0.5,10 L0.5,2.5 L3,2.5" fill="none" stroke="#1E1E1E" stroke-width="1"/><path d="M3.5,4.5 L10,4.5 L13.5,8 L13.5,14.5 L3.5,14.5 Z" fill="none" stroke="#1E1E1E" stroke-width="1.1"/><g stroke="#1E1E1E"><path d="M5.5,8.5 L11.5,8.5 M5.5,10.5 L11.5,10.5 M5.5,12.5 L11.5,12.5"/></g></svg>
<div class="a" style="left:1133px;top:111px;width:1px;height:20px;background:#A2A9BA;"></div>
<svg style="left:1143px;top:117px;" width="12" height="8" viewBox="0 0 12 8"><path d="M4,0.5 L0.8,4 L4,7.5 M8,0.5 L11.2,4 L8,7.5" stroke="#1E1E1E" stroke-width="1.5" fill="none"/></svg>
<svg style="left:1163px;top:114px;" width="15" height="14" viewBox="0 0 15 14"><path d="M1.5,12.5 L8,6" stroke="#1E1E1E" stroke-width="2.6" stroke-linecap="round"/><path d="M6.5,5 A4.5,4.5 0 0 1 12,0.5 L9.5,3 L11.5,5 L14,2.5 A4.5,4.5 0 0 1 9.5,8 Z" fill="#1E1E1E"/></svg>
<div class="a" style="left:1182px;top:109px;width:22px;height:24px;background:#FFF0B7;border:1px solid #E5C365"></div>
<div class="a" style="left:1186px;top:123px;width:14px;height:1.5px;background:#1E1E1E;"></div>
<div class="a" style="left:1192px;top:118.5px;width:8px;height:5px;background:#1E1E1E;"></div>
<div class="a" style="left:894px;top:135px;width:346px;height:1px;background:#C5CCDA;"></div>
<div class="a" style="left:894px;top:136px;width:346px;height:19px;background:#FCFCFC;"></div>
<div class="a" style="left:894px;top:155px;width:346px;height:3px;background:#C5CCDA;"></div>
<span class="t" style="transform:scaleX(1.0095);left:899.40px;top:138.84px;font-size:12px;color:#6D6D6D;font-weight:normal;font-family:'Liberation Sans',sans-serif;">솔루션 탐색기 검색(Ctrl+;)</span>
<svg style="left:1212px;top:139px;" width="14" height="13" viewBox="0 0 14 13"><circle cx="9" cy="4.8" r="3.6" fill="none" stroke="#424242" stroke-width="1.8"/><path d="M6.5,7.5 L1.5,12" stroke="#424242" stroke-width="2.4" stroke-linecap="round"/></svg>
<svg style="left:1230.5px;top:144px;" width="6" height="4" viewBox="0 0 6 4"><path d="M0,0 L6,0 L3,3 Z" fill="#717171"/></svg>
<div class="a" style="left:894px;top:285.6px;width:329px;height:19px;background:#C9CFE0;"></div>
<svg style="left:922px;top:164.5px;" width="7" height="11" viewBox="0 0 7 11"><path d="M1,0.8 L5.6,5 L1,9.2 Z" fill="none" stroke="#1E1E1E" stroke-width="1.1"/></svg>
<svg style="left:943px;top:165.5px;" width="15" height="8" viewBox="0 0 15 8"><rect x="0" y="1.5" width="4" height="4" fill="#424242"/><path d="M4,3.5 L7,3.5" stroke="#424242"/><rect x="8" y="0.5" width="6" height="6" fill="#424242"/></svg>
<span class="t" style="transform:scaleX(0.9500);left:963.60px;top:162.64px;font-size:12px;color:#1E1E1E;font-weight:normal;font-family:'Liberation Sans',sans-serif;">참조</span>
<svg style="left:922px;top:182.5px;" width="7" height="11" viewBox="0 0 7 11"><path d="M1,0.8 L5.6,5 L1,9.2 Z" fill="none" stroke="#1E1E1E" stroke-width="1.1"/></svg>
<svg style="left:945px;top:183.5px;" width="13" height="9" viewBox="0 0 13 9"><path d="M5.8,1.7 A3,3 0 1 0 5.8,6.5" fill="none" stroke="#388A34" stroke-width="2.1"/><path d="M8.5,0 L8.5,5 M10.5,0 L10.5,5 M7,1.5 L12,1.5 M7,3.5 L12,3.5" stroke="#388A34" stroke-width="1"/></svg>
<span class="t" style="transform:scaleX(0.9640);left:963.60px;top:181.64px;font-size:12px;color:#1E1E1E;font-weight:normal;font-family:'Liberation Sans',sans-serif;">ADCChannel.cs</span>
<svg style="left:922px;top:200.5px;" width="7" height="11" viewBox="0 0 7 11"><path d="M1,0.8 L5.6,5 L1,9.2 Z" fill="none" stroke="#1E1E1E" stroke-width="1.1"/></svg>
<svg style="left:945px;top:201.5px;" width="13" height="9" viewBox="0 0 13 9"><path d="M5.8,1.7 A3,3 0 1 0 5.8,6.5" fill="none" stroke="#388A34" stroke-width="2.1"/><path d="M8.5,0 L8.5,5 M10.5,0 L10.5,5 M7,1.5 L12,1.5 M7,3.5 L12,3.5" stroke="#388A34" stroke-width="1"/></svg>
<span class="t" style="transform:scaleX(1.0012);left:963.60px;top:199.64px;font-size:12px;color:#1E1E1E;font-weight:normal;font-family:'Liberation Sans',sans-serif;">ADS1115.cs</span>
<svg style="left:922px;top:218.5px;" width="7" height="11" viewBox="0 0 7 11"><path d="M1,0.8 L5.6,5 L1,9.2 Z" fill="none" stroke="#1E1E1E" stroke-width="1.1"/></svg>
<svg style="left:945px;top:219.5px;" width="13" height="9" viewBox="0 0 13 9"><path d="M5.8,1.7 A3,3 0 1 0 5.8,6.5" fill="none" stroke="#388A34" stroke-width="2.1"/><path d="M8.5,0 L8.5,5 M10.5,0 L10.5,5 M7,1.5 L12,1.5 M7,3.5 L12,3.5" stroke="#388A34" stroke-width="1"/></svg>
<span class="t" style="transform:scaleX(0.9640);left:963.60px;top:217.64px;font-size:12px;color:#1E1E1E;font-weight:normal;font-family:'Liberation Sans',sans-serif;">DACChannel.cs</span>
<svg style="left:922px;top:236.5px;" width="7" height="11" viewBox="0 0 7 11"><path d="M1,0.8 L5.6,5 L1,9.2 Z" fill="none" stroke="#1E1E1E" stroke-width="1.1"/></svg>
<svg style="left:945px;top:237.5px;" width="13" height="9" viewBox="0 0 13 9"><path d="M5.8,1.7 A3,3 0 1 0 5.8,6.5" fill="none" stroke="#388A34" stroke-width="2.1"/><path d="M8.5,0 L8.5,5 M10.5,0 L10.5,5 M7,1.5 L12,1.5 M7,3.5 L12,3.5" stroke="#388A34" stroke-width="1"/></svg>
<span class="t" style="transform:scaleX(0.8910);left:963.60px;top:235.64px;font-size:12px;color:#1E1E1E;font-weight:normal;font-family:'Liberation Sans',sans-serif;">GPIO.cs</span>
<svg style="left:922px;top:254.5px;" width="7" height="11" viewBox="0 0 7 11"><path d="M1,0.8 L5.6,5 L1,9.2 Z" fill="none" stroke="#1E1E1E" stroke-width="1.1"/></svg>
<svg style="left:945px;top:255.5px;" width="13" height="9" viewBox="0 0 13 9"><path d="M5.8,1.7 A3,3 0 1 0 5.8,6.5" fill="none" stroke="#388A34" stroke-width="2.1"/><path d="M8.5,0 L8.5,5 M10.5,0 L10.5,5 M7,1.5 L12,1.5 M7,3.5 L12,3.5" stroke="#388A34" stroke-width="1"/></svg>
<span class="t" style="transform:scaleX(0.9290);left:963.60px;top:253.64px;font-size:12px;color:#1E1E1E;font-weight:normal;font-family:'Liberation Sans',sans-serif;">I2C.cs</span>
<svg style="left:922px;top:272.5px;" width="7" height="11" viewBox="0 0 7 11"><path d="M1,0.8 L5.6,5 L1,9.2 Z" fill="none" stroke="#1E1E1E" stroke-width="1.1"/></svg>
<svg style="left:945px;top:273.5px;" width="13" height="9" viewBox="0 0 13 9"><path d="M5.8,1.7 A3,3 0 1 0 5.8,6.5" fill="none" stroke="#388A34" stroke-width="2.1"/><path d="M8.5,0 L8.5,5 M10.5,0 L10.5,5 M7,1.5 L12,1.5 M7,3.5 L12,3.5" stroke="#388A34" stroke-width="1"/></svg>
<span class="t" style="transform:scaleX(0.9969);left:963.60px;top:271.64px;font-size:12px;color:#1E1E1E;font-weight:normal;font-family:'Liberation Sans',sans-serif;">Input.cs</span>
<svg style="left:922px;top:290.5px;" width="7" height="11" viewBox="0 0 7 11"><path d="M1,0.8 L5.6,5 L1,9.2 Z" fill="none" stroke="#1E1E1E" stroke-width="1.1"/></svg>
<svg style="left:945px;top:291.5px;" width="13" height="9" viewBox="0 0 13 9"><path d="M5.8,1.7 A3,3 0 1 0 5.8,6.5" fill="none" stroke="#388A34" stroke-width="2.1"/><path d="M8.5,0 L8.5,5 M10.5,0 L10.5,5 M7,1.5 L12,1.5 M7,3.5 L12,3.5" stroke="#388A34" stroke-width="1"/></svg>
<span class="t" style="transform:scaleX(0.9781);left:963.60px;top:289.64px;font-size:12px;color:#1E1E1E;font-weight:normal;font-family:'Liberation Sans',sans-serif;">MCP4725.cs</span>
<svg style="left:922px;top:308.5px;" width="7" height="11" viewBox="0 0 7 11"><path d="M1,0.8 L5.6,5 L1,9.2 Z" fill="none" stroke="#1E1E1E" stroke-width="1.1"/></svg>
<svg style="left:945px;top:309.5px;" width="13" height="9" viewBox="0 0 13 9"><path d="M5.8,1.7 A3,3 0 1 0 5.8,6.5" fill="none" stroke="#388A34" stroke-width="2.1"/><path d="M8.5,0 L8.5,5 M10.5,0 L10.5,5 M7,1.5 L12,1.5 M7,3.5 L12,3.5" stroke="#388A34" stroke-width="1"/></svg>
<span class="t" style="transform:scaleX(1.0008);left:963.60px;top:307.64px;font-size:12px;color:#1E1E1E;font-weight:normal;font-family:'Liberation Sans',sans-serif;">Output.cs</span>
<svg style="left:922px;top:326.5px;" width="7" height="11" viewBox="0 0 7 11"><path d="M1,0.8 L5.6,5 L1,9.2 Z" fill="none" stroke="#1E1E1E" stroke-width="1.1"/></svg>
<svg style="left:945px;top:327.5px;" width="13" height="9" viewBox="0 0 13 9"><path d="M5.8,1.7 A3,3 0 1 0 5.8,6.5" fill="none" stroke="#388A34" stroke-width="2.1"/><path d="M8.5,0 L8.5,5 M10.5,0 L10.5,5 M7,1.5 L12,1.5 M7,3.5 L12,3.5" stroke="#388A34" stroke-width="1"/></svg>
<span class="t" style="transform:scaleX(1.0005);left:963.60px;top:325.64px;font-size:12px;color:#1E1E1E;font-weight:normal;font-family:'Liberation Sans',sans-serif;">pigpio.cs</span>
<svg style="left:904px;top:346.5px;" width="8" height="8" viewBox="0 0 8 8"><path d="M7.5,0 L7.5,7.5 L0,7.5 Z" fill="#1E1E1E"/></svg>
<div class="a" style="left:925px;top:343px;width:14px;height:13px;background:#FCFCFC;border:1px solid #388A34"></div>
<span class="t" style="transform:scaleX(1.0748);left:926.30px;top:346.23px;font-size:8px;color:#424242;font-weight:normal;font-family:'Liberation Sans',sans-serif;">C#</span>
<span class="t" style="transform:scaleX(0.9512);left:945.30px;top:343.64px;font-size:12px;color:#1E1E1E;font-weight:bold;font-family:'Liberation Sans',sans-serif;">Comfile.ComfilePi.CP_IO22_A4_2_Test</span>
<svg style="left:922px;top:362.5px;" width="7" height="11" viewBox="0 0 7 11"><path d="M1,0.8 L5.6,5 L1,9.2 Z" fill="none" stroke="#1E1E1E" stroke-width="1.1"/></svg>
<span class="t" style="transform:scaleX(0.9634);left:963.30px;top:361.64px;font-size:12px;color:#1E1E1E;font-weight:normal;font-family:'Liberation Sans',sans-serif;">Properties</span>
<svg style="left:922px;top:380.5px;" width="7" height="11" viewBox="0 0 7 11"><path d="M1,0.8 L5.6,5 L1,9.2 Z" fill="none" stroke="#1E1E1E" stroke-width="1.1"/></svg>
<span class="t" style="transform:scaleX(0.9625);left:963.30px;top:378.64px;font-size:12px;color:#1E1E1E;font-weight:normal;font-family:'Liberation Sans',sans-serif;">참조</span>
<svg style="left:922px;top:398.5px;" width="7" height="11" viewBox="0 0 7 11"><path d="M1,0.8 L5.6,5 L1,9.2 Z" fill="none" stroke="#1E1E1E" stroke-width="1.1"/></svg>
<span class="t" style="transform:scaleX(0.9188);left:963.30px;top:397.64px;font-size:12px;color:#1E1E1E;font-weight:normal;font-family:'Liberation Sans',sans-serif;">Resources</span>
<span class="t" style="transform:scaleX(1.0200);left:963.30px;top:415.64px;font-size:12px;color:#1E1E1E;font-weight:normal;font-family:'Liberation Sans',sans-serif;">app.config</span>
<svg style="left:922px;top:434.5px;" width="7" height="11" viewBox="0 0 7 11"><path d="M1,0.8 L5.6,5 L1,9.2 Z" fill="none" stroke="#1E1E1E" stroke-width="1.1"/></svg>
<span class="t" style="transform:scaleX(0.9934);left:963.30px;top:433.64px;font-size:12px;color:#1E1E1E;font-weight:normal;font-family:'Liberation Sans',sans-serif;">Button.cs</span>
<svg style="left:942px;top:361px;" width="15" height="14" viewBox="0 0 15 14"><path d="M1.5,12.5 L8,6" stroke="#424242" stroke-width="2.6" stroke-linecap="round"/><path d="M6.5,5 A4.5,4.5 0 0 1 12,0.5 L9.5,3 L11.5,5 L14,2.5 A4.5,4.5 0 0 1 9.5,8 Z" fill="#424242"/></svg>
<svg style="left:943px;top:382.5px;" width="15" height="8" viewBox="0 0 15 8"><rect x="0" y="1.5" width="4" height="4" fill="#424242"/><path d="M4,3.5 L7,3.5" stroke="#424242"/><rect x="8" y="0.5" width="6" height="6" fill="#424242"/></svg>
<svg style="left:943px;top:397px;" width="15" height="13" viewBox="0 0 15 13"><path d="M0.5,1 L5,1 L6.5,2.5 L14.5,2.5 L14.5,12.5 L0.5,12.5 Z" fill="#DCB67A"/></svg>
<svg style="left:942px;top:413px;" width="15" height="15" viewBox="0 0 15 15"><path d="M5,0.5 L11,0.5 L14.5,4 L14.5,14.5 L5,14.5" fill="none" stroke="#424242"/><path d="M3,5 L3,13 M0.5,8 L5.5,8" stroke="#424242" stroke-width="1.5"/><circle cx="3" cy="7" r="2.2" fill="none" stroke="#424242" stroke-width="1.2"/></svg>
<svg style="left:942px;top:431px;" width="15" height="15" viewBox="0 0 15 15"><path d="M5,0.5 L11,0.5 L14.5,4 L14.5,14.5 L7,14.5 M5,0.5 L5,9" fill="none" stroke="#424242"/><rect x="0.5" y="10.5" width="3" height="3" fill="none" stroke="#424242"/><path d="M3,10 L6,7" stroke="#424242"/></svg>
<div class="a" style="left:1223px;top:157px;width:17px;height:291px;background:#E8E8EC;"></div>
<svg style="left:1227px;top:165px;" width="9" height="5" viewBox="0 0 9 5"><path d="M0,5 L4.5,0 L9,5 Z" fill="#868999"/></svg>
<div class="a" style="left:1227px;top:209px;width:9px;height:178px;background:#C2C3C9;"></div>
<svg style="left:1227px;top:436px;" width="9" height="5" viewBox="0 0 9 5"><path d="M0,0 L4.5,5 L9,0 Z" fill="#868999"/></svg>
<div class="a" style="left:893px;top:448px;width:348px;height:27px;background:#33476A;"></div>
<div class="a" style="left:894px;top:448px;width:86px;height:19px;background:#FFFFFF;"></div>
<div class="a" style="left:980px;top:448px;width:63px;height:19px;background:#4D6082;"></div>
<span class="t" style="transform:scaleX(0.9901);left:899.40px;top:450.84px;font-size:12px;color:#1E1E1E;font-weight:normal;font-family:'Liberation Sans',sans-serif;">솔루션 탐색기</span>
<span class="t" style="transform:scaleX(0.9602);left:987.40px;top:450.84px;font-size:12px;color:#FFFFFF;font-weight:normal;font-family:'Liberation Sans',sans-serif;">팀 탐색기</span>
<div class="a" style="left:893px;top:475px;width:348px;height:279px;background:#FFFFFF;border:1px solid #8391B0"></div>
<div class="a" style="left:894px;top:476px;width:346px;height:21px;background:#4D6082;"></div>
<span class="t" style="transform:scaleX(0.9417);left:898.60px;top:480.34px;font-size:12px;color:#FFFFFF;font-weight:normal;font-family:'Liberation Sans',sans-serif;">속성</span>
<svg style="left:1192px;top:485px;" width="8" height="4" viewBox="0 0 8 4"><path d="M0,0 L8,0 L4,4 Z" fill="#E0E3EA"/></svg>
<svg style="left:1210px;top:482px;" width="8" height="11" viewBox="0 0 8 11"><path d="M2,0.5 L5.5,0.5 L5.5,6.5 M0,6.5 L7,6.5 M3.5,6.5 L3.5,11" fill="none" stroke="#E0E3EA" stroke-width="1.1"/><rect x="1" y="0" width="2" height="6.5" fill="#E0E3EA"/></svg>
<svg style="left:1224px;top:482.5px;" width="10" height="9" viewBox="0 0 10 9"><path d="M0.5,0.5 L9.5,8.5 M9.5,0.5 L0.5,8.5" stroke="#E0E3EA" stroke-width="1.3"/></svg>
<div class="a" style="left:894px;top:497px;width:346px;height:24px;background:#FCFCFC;"></div>
<svg style="left:1230.5px;top:508px;" width="6" height="4" viewBox="0 0 6 4"><path d="M0,0 L6,0 L3,3 Z" fill="#1E1E1E"/></svg>
<div class="a" style="left:895px;top:522px;width:345px;height:25px;background:#CFD6E5;"></div>
<div class="a" style="left:897px;top:523px;width:23px;height:22px;background:#FFF0B7;border:1px solid #E5C365"></div>
<svg style="left:901px;top:526px;" width="15" height="16" viewBox="0 0 15 16"><g fill="#1E1E1E"><rect x="0" y="1" width="5" height="5"/><rect x="0" y="10" width="5" height="5"/></g><g fill="#fff"><rect x="1.5" y="3" width="2" height="1"/><rect x="2" y="2.5" width="1" height="2"/><rect x="1.5" y="12" width="2" height="1"/><rect x="2" y="11.5" width="1" height="2"/></g><g stroke="#1E1E1E" stroke-width="1"><path d="M6,1.5 L11,1.5 M6,3.5 L11,3.5 M12,3.5 L14,3.5 M6,5.5 L11,5.5 M12,5.5 L14,5.5 M6,7.5 L11,7.5 M12,7.5 L14,7.5 M6,9.5 L11,9.5 M12,9.5 L14,9.5 M6,11.5 L11,11.5 M6,13.5 L11,13.5 M12,13.5 L14,13.5"/></g></svg>
<svg style="left:923px;top:526px;" width="16" height="16" viewBox="0 0 16 16"><rect x="1" y="1" width="7" height="7" fill="#2D2D2D"/><text x="4.5" y="7.3" text-anchor="middle" font-family="Liberation Sans" font-size="7" font-weight="bold" fill="#E8E8E8">A</text><text x="4.5" y="15" text-anchor="middle" font-family="Liberation Sans" font-size="7.5" font-weight="bold" fill="#2D2D2D">Z</text><path d="M12,4 L12,12" stroke="#0E3D9A" stroke-width="1.8"/><path d="M9,9.5 L12,13.5 L15,9.5 Z" fill="#0E3D9A"/></svg>
<div class="a" style="left:946px;top:525px;width:1px;height:20px;background:#A2A9BA;"></div>
<svg style="left:952px;top:526px;" width="16" height="16" viewBox="0 0 16 16"><path d="M2,13.5 L8.5,7" stroke="#9A9EA8" stroke-width="3" stroke-linecap="round"/><circle cx="10.5" cy="5" r="4.3" fill="#9A9EA8"/><path d="M11,4.5 L15,0.5" stroke="#CFD6E5" stroke-width="2.6"/></svg>
<div class="a" style="left:894px;top:689px;width:346px;height:1px;background:#E0E3E6;"></div>
<div class="a" style="left:0px;top:760px;width:1247px;height:23px;background:#007ACC;"></div>
<span class="t" style="transform:scaleX(0.9167);left:5.00px;top:764.84px;font-size:12px;color:#FFFFFF;font-weight:normal;font-family:'Liberation Sans',sans-serif;">준비</span>
<span class="t" style="transform:scaleX(0.9864);left:469.30px;top:764.84px;font-size:12px;color:#FFFFFF;font-weight:normal;font-family:'Liberation Sans',sans-serif;">줄: 1</span>
<span class="t" style="transform:scaleX(0.9746);left:561.60px;top:764.84px;font-size:12px;color:#FFFFFF;font-weight:normal;font-family:'Liberation Sans',sans-serif;">열: 1</span>
<span class="t" style="transform:scaleX(0.9988);left:653.30px;top:764.84px;font-size:12px;color:#FFFFFF;font-weight:normal;font-family:'Liberation Sans',sans-serif;">문자: 1</span>
<span class="t" style="transform:scaleX(0.9493);left:788.70px;top:765.84px;font-size:12px;color:#FFFFFF;font-weight:normal;font-family:'Liberation Sans',sans-serif;">INS</span>
<svg style="left:1089px;top:765px;" width="10" height="13" viewBox="0 0 10 13"><path d="M1,5.5 L4.5,1.5 L8,5.5" stroke="#EDE6DA" stroke-width="2.2" fill="none"/><path d="M4.5,2 L4.5,12.5" stroke="#EDE6DA" stroke-width="2.2"/></svg>
<span class="t" style="transform:scaleX(1.0102);left:1108.00px;top:764.84px;font-size:12px;color:#FFFFFF;font-weight:normal;font-family:'Liberation Sans',sans-serif;">소스 제어에 추가</span>
<svg style="left:1206px;top:770px;" width="8" height="4" viewBox="0 0 8 4"><path d="M0,4 L4,0 L8,4 Z" fill="#fff"/></svg>
<svg style="left:1235px;top:771px;" width="7" height="7" viewBox="0 0 7 7"><g fill="#A9D1F0"><rect x="6" y="0" width="1" height="1"/><rect x="6" y="2" width="1" height="1"/><rect x="4" y="2" width="1" height="1"/><rect x="6" y="4" width="1" height="1"/><rect x="4" y="4" width="1" height="1"/><rect x="2" y="4" width="1" height="1"/><rect x="6" y="6" width="1" height="1"/><rect x="4" y="6" width="1" height="1"/><rect x="2" y="6" width="1" height="1"/><rect x="0" y="6" width="1" height="1"/></g></svg>
</body></html>
